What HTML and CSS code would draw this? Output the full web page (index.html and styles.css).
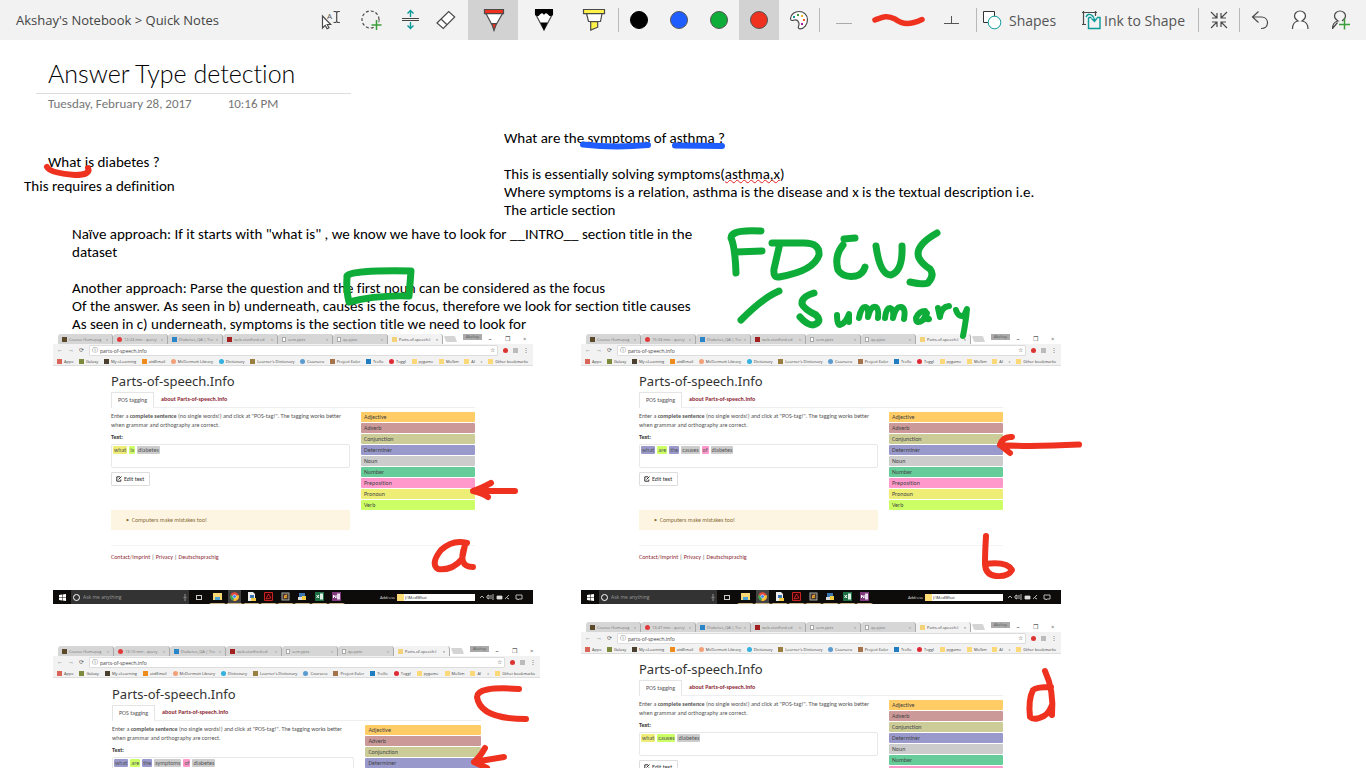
FILE: index.html
```html
<!DOCTYPE html>
<html lang="en">
<head>
<meta charset="utf-8">
<title>Answer Type detection</title>
<link rel="stylesheet" href="styles.css">
</head>
<body>
<header class="toolbar">
  <nav class="crumbs">Akshay's Notebook &gt; Quick Notes</nav>
  <div class="tools">
    <button class="tool" aria-label="Select"><svg viewBox="0 0 40 40"><path class="ln" fill="#fff" d="M14.5 16v12l2.7-2.6 1.9 3.4 1.9-1-1.8-3.3h3.5z"/><path class="ln" d="M25.5 11.5h2.2l1 1 1-1h2.2M28.7 12.5v9M25.5 22.5h2.2l1-1 1 1h2.2"/><text x="19" y="19" class="ico-a">A</text></svg></button>
    <button class="tool" aria-label="Lasso"><svg viewBox="0 0 40 40"><circle class="ln" cx="22.5" cy="19.5" r="8.5" stroke-dasharray="3 2"/><path d="M28.5 20v10M23.5 25h10" stroke="#f2f2f2" stroke-width="4"/><path d="M28.5 20v10M23.5 25h10" stroke="#3a9f3a" stroke-width="1.5"/></svg></button>
    <button class="tool" aria-label="Insert space"><svg viewBox="0 0 40 40"><path d="M14 18.5h17M14 20.5h17" stroke="#444"/><path class="teal" d="M22.5 17v-6.5M19.5 13.5l3-3 3 3M22.5 22v6.5M19.5 25.5l3 3 3-3"/></svg></button>
    <button class="tool" aria-label="Eraser"><svg viewBox="0 0 40 40"><path class="ln" fill="#fff" d="M9 23L20.7 11.5l6 5.5L15.3 28.5zM13 19l6 5.7"/></svg></button>
    <button class="tool pen selected" aria-label="Red pen"><svg viewBox="0 0 50 40"><path class="ln" fill="#fff" d="M18 13.5h16.5L28.5 24h-5z"/><path class="ln" fill="#ef3220" d="M16.5 9.5h19v4.2h-19zM23.7 23.7h4.8L26 30.5z"/></svg></button>
    <button class="tool pen" aria-label="Pencil"><svg viewBox="0 0 50 40"><path class="ln" fill="#fff" d="M17.5 14L26 30l8.5-16v-3h-17z"/><path d="M17 9h18v6q-3 2.500-5-.5-2.500-2.500-4 .5-1.500-3-4-.5-2 3-5 .5zM22.300 22.500h7.400L26 30.500z"/></svg></button>
    <button class="tool pen" aria-label="Highlighter"><svg viewBox="0 0 50 40"><path class="ln" fill="#fff" d="M18.500 13.500h15.500l-1.500 8h-12z"/><path class="ln" fill="#fff24a" d="M15.500 9.500h21v4.200h-21zM22.700 21.700h7v5.500l-7 2.800z"/></svg></button>
    <i class="sep"></i>
    <button class="tool" aria-label="Black"><i class="dot black"></i></button>
    <button class="tool" aria-label="Blue"><i class="dot blue"></i></button>
    <button class="tool" aria-label="Green"><i class="dot green"></i></button>
    <button class="tool selected" aria-label="Red"><i class="dot red"></i></button>
    <button class="tool" aria-label="More colors"><svg viewBox="0 0 40 40"><path class="ln" fill="#fff" d="M11.500 18.500C12 14 16 11.500 20 11.500c5 0 8.500 3.500 8.500 8 0 5-3.500 9.300-7.500 9.300-3.500 0-.5-3.200-1-5.500-.8-2.800-2.500-3.800-4.500-3.300-2 .6-4 1.200-4-1.500z"/><path fill="#0b9a9a" d="M14 16h2v2h-2z"/><path fill="#3a9f3a" d="M18 14h2v2h-2z"/><path fill="#f5b52a" d="M22 15h2v2h-2z"/><path fill="#ef5a20" d="M24 19h2v2h-2z"/><path fill="#b5179e" d="M22 23h2v2h-2z"/></svg></button>
    <i class="sep"></i>
    <button class="tool pen" aria-label="Thinner"><svg viewBox="0 0 50 40"><path d="M16 23.500h16" stroke="#aaa"/></svg></button>
    <button class="tool stroke" aria-label="Stroke preview"><svg viewBox="0 0 56 40"><path d="M5 20c8-3 12-5 20-1 8 6 15 6 27 0.500" fill="none" stroke="#ef3220" stroke-width="5.500" stroke-linecap="round"/></svg></button>
    <button class="tool pen" aria-label="Thicker"><svg viewBox="0 0 50 40"><path d="M18 23.500h15M25.500 16v7" stroke="#555"/></svg></button>
    <i class="sep"></i>
    <button class="tool shapes"><svg viewBox="0 0 32 40"><path d="M6.500 11.500h11v11h-11z" fill="#fff" stroke="#333"/><circle cx="17.500" cy="22.500" r="6.300" fill="#fff" stroke="#0b9a9a"/></svg>Shapes</button>
    <button class="tool inkshape"><svg viewBox="0 0 28 40"><path class="ln" d="M6 12.500h15M7.500 11v14M19.500 11v5M6 24.500h4"/><path class="teal" d="M12.500 17.500h3M21 17.500h3v11H12.500v-11"/><path class="teal" d="M10 17q2-4 5.500-2 2.500 1.500 3 6M15.500 18.500l3 3 2.500-3.500"/></svg>Ink to Shape</button>
    <i class="sep"></i>
    <button class="tool" aria-label="Collapse"><svg viewBox="0 0 40 40"><path class="ln" d="M12 12l6 6M13 18h5v-5M28 12l-6 6M22 13v5h5M12 28l6-6M13 22h5v5M28 28l-6-6M22 27v-5h5"/></svg></button>
    <i class="sep"></i>
    <button class="tool" aria-label="Undo"><svg viewBox="0 0 40 40"><path class="ln" d="M18.500 11.500l-6 5.500 6 5.500M12.500 17H22c8 1 7 12-1 11.500"/></svg></button>
    <button class="tool" aria-label="Account"><svg viewBox="0 0 40 40"><path class="ln" fill="#fafafa" d="M12.500 29q0-7 5.500-8-3.500-2-3.500-5a5.500 5 0 0 1 11 0q0 3-3.500 5 6 1 6 8"/></svg></button>
    <button class="tool" aria-label="Share"><svg viewBox="0 0 40 40"><path class="ln" d="M12.500 29q0-7 5.500-8-3.500-2-3.500-5a5.500 5 0 0 1 11 0q0 3-3.500 5M12.500 28.500l5-6"/><path d="M24.500 18.500v11M19 24.500h11" stroke="#3a9f3a" stroke-width="1.500"/></svg></button>
  </div>
</header>
<main class="canvas">
  <section class="page-title">
    <h1>Answer Type detection</h1>
    <p><span>Tuesday, February 28, 2017</span><span>10:16 PM</span></p>
  </section>
  <p class="note note-question">What is diabetes ?</p>
  <p class="note note-definition">This requires a definition</p>
  <div class="note note-approach">
    <p>Naïve approach: If it starts with "what is" , we know we have to look for __INTRO__ section title in the<br>dataset</p>
    <p>Another approach: Parse the question and the first noun can be considered as the focus<br>Of the answer. As seen in b) underneath, causes is the focus, therefore we look for section title causes<br>As seen in c) underneath, symptoms is the section title we need to look for</p>
  </div>
  <div class="note note-asthma">
    <p>What are the symptoms of asthma ?</p>
    <p>This is essentially solving symptoms(<span class="misspelt">asthma,x</span>)<br>Where symptoms is a relation, asthma is the disease and x is the textual description i.e.<br>The article section</p>
  </div>
  <article class="shot shot-a" data-time="12:24" data-words="what:pronoun is:verb diabetes:noun"></article>
  <article class="shot shot-b" data-time="15:34" data-words="what:determiner are:verb the:determiner causes:noun of:preposition diabetes:noun"></article>
  <article class="shot shot-c" data-time="13:10" data-words="what:determiner are:verb the:determiner symptoms:noun of:preposition diabetes:noun"></article>
  <article class="shot shot-d" data-time="13:47" data-words="what:pronoun causes:verb diabetes:noun"></article>
  <svg class="ink" width="1366" height="728" viewBox="0 40 1366 728" aria-hidden="true">
    <g class="ink-blue"><path d="M583 144.500Q614 148 648 145"/><path d="M675 145.500L722 146"/></g>
    <g class="ink-green">
      <path d="M761 231Q741 230 735 233 731 235 731 238 735 246 736 273M736 252L762 251"/>
      <path d="M772 243H804Q820 243 819 255 814 271 779 277 773 278 774 269L780 243"/>
      <path d="M844 239L855 238M843 245Q834 256 838 270 843 278 856 276 863 274 865 267"/>
      <path d="M876 246Q880 275 891 275 903 271 902 246"/>
      <path d="M937 233Q914 246 919 258 922 264 930 269 935 275 928 283 923 285 910 282"/>
      <path d="M779 291Q764 297 741 320"/>
      <path d="M814 293Q801 297 802 304 804 309 816 315 823 322 813 325 807 325 800 317"/>
      <path class="fine" d="M837 315Q837 325 840 325 846 323 849 314V322"/>
      <path class="fine" d="M859 318Q861 307 865 307 869 307 868 317 871 305 876 307 879 309 878 318"/>
      <path class="fine" d="M885 318Q886 308 890 308 894 309 893 318 896 306 901 307 906 308 904 319"/>
      <path class="fine" d="M925 311Q919 311 916 318 916 325 923 320L927 313Q925 320 929 319"/>
      <path class="fine" d="M938 308L940 317Q941 307 949 306"/>
      <path class="fine" d="M956 310Q958 317 964 316L967 309Q966 321 963 336"/>
      <path d="M347 276Q350 270 411 271L409 296Q375 295 349 302 346 290 347 277"/>
    </g>
    <g class="ink-red">
      <path d="M47 167Q50 173 75 175 91 175 88 168"/>
      <path d="M515 491H473M491 483Q480 489 473 491 482 493 488 497"/>
      <path d="M467 543Q453 539 441 550 430 564 438 569 452 571 462 559L465 545Q457 567 473 567"/>
      <path d="M1079 444.500Q1030 447 1000 445M1012 437Q1003 436 1000 445L1010 453"/>
      <path d="M986 536Q985 552 985 563 985 575 996 576 1008 577 1012 570 1007 561 985 564"/>
      <path d="M519 689Q477 686 477 697 480 719 526 719"/>
      <path d="M504 757L474 762M485 748Q480 757 474 762L487 768"/>
      <path d="M1045 671Q1054 690 1052 715M1051 687Q1036 687 1033 690 1028 700 1030 717 1034 721 1044 716 1049 713 1052 705"/>
    </g>
  </svg>
</main>
<script src="app.js"></script>
</body>
</html>
```
FILE: styles.css
```css
* { box-sizing: border-box; }
body { margin: 0; height: 100vh; display: flex; flex-direction: column; overflow: hidden; background: #fff; color: #000; font-family: Carlito, Lato, sans-serif; font-variant-ligatures: none; }
h1, h2, p, ul { margin: 0; padding: 0; font-weight: normal; }
ul { list-style: none; }
button { margin: 0; padding: 0; border: 0; background: none; font: inherit; color: inherit; }

.toolbar { flex: none; height: 40px; display: flex; align-items: center; justify-content: space-between; padding: 0 6px 0 16px; background: #f2f2f2; font-family: "Open Sans", sans-serif; color: #444; white-space: nowrap; }
.crumbs { font-size: 13px; }
.tools { display: flex; align-items: center; }
.tool { width: 40px; height: 40px; display: flex; align-items: center; justify-content: center; }
.tool svg { height: 40px; flex: none; }
.pen { width: 50px; }
.stroke { width: 56px; }
.shapes, .inkshape { justify-content: flex-start; font-size: 14px; color: #555; }
.shapes { width: 99px; }
.inkshape { width: 122px; }
.selected { background: #d2d2d2; }
.sep { width: 1px; height: 24px; background: #b8b8b8; }
.dot { width: 18px; height: 18px; border: 1px solid #555; border-radius: 50%; }
.black { background: #000; border-color: #000; }
.blue { background: #1f5dff; }
.green { background: #0eac38; }
.red { background: #ef3220; }
.ln { stroke: #4a4a4a; stroke-width: 1.2; }
.ln:not([fill]) { fill: none; }
.teal { stroke: #0b9a9a; stroke-width: 1.4; fill: none; }
.ico-a { font-size: 8px; fill: #555; }

.canvas { position: relative; flex: 1; overflow: hidden; }
.page-title { position: absolute; left: 36px; top: 18px; width: 315px; }
.page-title h1 { height: 36px; padding-left: 12px; border-bottom: 1px solid #ddd; font-family: Lato, sans-serif; font-size: 25px; line-height: 30px; font-weight: 300; white-space: nowrap; }
.page-title p { display: flex; gap: 36px; padding-left: 12px; font-size: 13px; line-height: 20px; color: #767676; white-space: nowrap; }
.note { position: absolute; font-size: 15px; line-height: 18px; white-space: nowrap; }
.note p + p { margin-top: 18px; }
.note-question { left: 48px; top: 113px; }
.note-definition { left: 24px; top: 137px; }
.note-approach { left: 72px; top: 185px; }
.note-asthma { left: 504px; top: 89px; }
.misspelt { text-decoration: underline wavy #e02020 1px; text-decoration-skip-ink: none; text-underline-offset: 0; }
.ink { position: absolute; left: 0; top: 0; fill: none; stroke-width: 6; stroke-linecap: round; stroke-linejoin: round; pointer-events: none; }
.ink-blue { stroke: #1f5dff; }
.ink-green { stroke: #0eac38; stroke-width: 7; }
.ink-green .fine { stroke-width: 6; }
.ink-red { stroke: #ef3220; }

.shot { position: absolute; width: 480px; background: #fff; font-size: 6px; line-height: 9px; color: #555; white-space: nowrap; }
.shot-a { left: 53px; top: 294px; }
.shot-b { left: 581px; top: 294px; }
.shot-c { left: 53px; top: 606px; width: 487px; }
.shot-d { left: 581px; top: 582px; }

.tabstrip { display: flex; height: 10px; padding-left: 5px; font-family: "Open Sans", sans-serif; font-size: 4px; }
.tab { flex: 1; height: 10px; display: flex; align-items: center; gap: 2px; padding: 0 4px; background: #d6d6d6; border-right: 1px solid #aaa; border-radius: 3px 3px 0 0; color: #777; }
.tab span { flex: 1; text-align: left; }
.tab.active { background: #f2f2f2; color: #444; }
.newtab { width: 11px; height: 6px; margin: 2px; background: #d4d4d4; border-radius: 1px; transform: skewX(20deg); }
.user { width: 19px; height: 6px; margin-left: 5px; background: #aaa; line-height: 6px; text-align: center; color: #555; }
.win { width: 51px; display: flex; justify-content: space-around; align-items: center; font-size: 6px; }
.fav { flex: none; width: 5px; height: 5px; background: var(--c, #ddd); }
.fav.round { border-radius: 50%; }
.fav.page { border: 1px solid #aaa; background: #fff; width: 4px; }
.address { display: flex; align-items: center; height: 13px; padding: 1px 4px; gap: 5px; background: #f2f2f2; font-family: "Open Sans", sans-serif; font-size: 6px; }
.url { flex: 1; height: 11px; display: flex; align-items: center; gap: 2px; padding: 0 2px; background: #fff; border: 1px solid #ddd; border-radius: 1px; font-size: 6px; }
.url input { flex: 1; min-width: 0; padding: 0; border: 0; background: none; font: 5px "Open Sans", sans-serif; color: #444; }
.bookmarks { display: flex; align-items: center; justify-content: space-between; height: 9px; padding: 0 5px 0 4px; background: #f2f2f2; border-bottom: 1px solid #ddd; font-family: "Open Sans", sans-serif; font-size: 4px; }
.bookmarks a { display: flex; align-items: center; gap: 2px; color: #444; text-decoration: none; }

.site { padding: 5px 58px 0; }
.shot-c .site { padding: 6px 59px 0; }
.site h2 { height: 21px; line-height: 20px; font-family: "Noto Sans", sans-serif; font-size: 13px; color: #333; }
.site-tabs { display: flex; height: 16px; border-bottom: 1px solid #eee; font-weight: bold; line-height: 15px; }
.site-tabs a { padding: 0 7px; color: #8d2a36; text-decoration: none; }
.site-tabs a.current { height: 16px; padding: 0 6px; background: #fff; border: 1px solid #e5e5e5; border-bottom: 0; border-radius: 1px; color: #555; font-weight: normal; }
.cols { display: grid; grid-template-columns: 239fr 114fr; column-gap: 11px; padding-top: 4px; }
.cols label { display: block; margin-top: 3px; font-weight: bold; color: #333; }
.words { height: 24px; display: flex; align-items: flex-start; gap: 2px; margin-top: 2px; padding: 1px; border: 1px solid #e8e8e8; border-radius: 2px; }
.words span { padding: 0 1px; line-height: 8px; border-radius: 1px; }
.edit { display: flex; align-items: center; gap: 2px; width: 39px; height: 14px; margin-top: 4px; padding: 0 4px; border: 1px solid #ddd; border-radius: 1px; color: #333; }
.edit svg { width: 6px; height: 6px; }
.alert { height: 20px; margin-top: 24px; padding-left: 15px; line-height: 20px; border-radius: 1px; background: #fdf5e1; color: #8a6d3b; }
.kinds li { height: 10px; margin-bottom: 1px; padding-left: 3px; line-height: 10px; border-radius: 1px; color: #444; }
.adjective { background: #fc6; }
.adverb { background: #c99; }
.conjunction { background: #cc9; }
.determiner { background: #99c; }
.noun { background: #ccc; }
.number { background: #6c9; }
.preposition { background: #f9c; }
.pronoun { background: #ee7; }
.verb { background: #cf6; }
.foot { margin-top: 15px; padding-top: 7px; height: 45px; border-top: 1px solid #f4f4f4; }
.foot a { color: #8d2a36; text-decoration: none; }

.taskbar { display: flex; align-items: center; height: 14px; background: #0d0c0b; color: #ddd; font-family: "Open Sans", sans-serif; font-size: 5px; }
.start { width: 18px; height: 14px; display: grid; place-items: center; }
.start svg { width: 7px; height: 7px; }
.search { width: 118px; height: 14px; display: flex; align-items: center; gap: 3px; padding: 0 2px; background: #333; color: #999; }
.search i { width: 7px; height: 7px; border: 1px solid #fff; border-radius: 50%; }
.search svg { width: 4px; height: 7px; margin-left: auto; }
.view { width: 6px; height: 5px; margin: 0 7px; border: 1px solid #ccc; }
.app { width: 17px; height: 14px; display: grid; place-items: center; border-bottom: 1px solid #c9b48c; border-left: 2px solid #0d0c0b; border-right: 2px solid #0d0c0b; }
.app.on { background: #444; }
.app svg { width: 9px; height: 9px; }
.addr { margin-left: auto; font-size: 4px; display: flex; align-items: center; gap: 2px; }
.addr input { width: 78px; height: 7px; padding: 0 8px; border: 0; background: linear-gradient(90deg, #fd7 7px, #fff 7px); font: 4px "Open Sans", sans-serif; color: #222; }
.tray { width: 58px; padding: 0 8px 0 4px; }
.tray svg { display: block; width: 46px; height: 8px; }
```
FILE: app.js
```js
const kinds = ["Adjective", "Adverb", "Conjunction", "Determiner", "Noun", "Number", "Preposition", "Pronoun", "Verb"];

const fav = (color, shape = "") => `<i class="fav ${shape}" style="--c:${color}"></i>`;

const tabs = time => [
  ["Course Homepag", fav("#5a4a2a")],
  [`${time} min - query`, fav("#e23b3b", "round")],
  ["Diabetes_QA | Tre", fav("#2a86c8")],
  ["web.stanford.ed", fav("#a32020")],
  ["sem.pptx", fav("", "page")],
  ["qa.pptx", fav("", "page")],
  ["Parts-of-speech.I", fav("#f3d27a")]
];

const bookmarks = [
  ["Apps", "#d9655a"], ["Galaxy", "#7d8a3c"], ["My eLearning", "#4a4030"], ["utdEmail", "#f08c1e"],
  ["McDermott Library", "#f2a07a", "round"], ["Dictionary", "#33b1e0", "round"], ["Learner's Dictionary", "#9a8040"],
  ["Coursera", "#5a9bd0", "round"], ["Project Euler", "#a5734a"], ["Trello", "#1f7ec2"], ["Toggl", "#e02a36", "round"],
  ["pygame", "#fbd978"], ["MoSim", "#fbd978"], ["AI", "#fbd978"]
];

const appIcons = [
  '<path fill="#f8d775" d="M0 1h9v7H0z"/><path fill="#4da3d8" d="M2 5h5v3H2z"/>',
  '<circle cx="4.500" cy="4.500" r="4.300" fill="#e3493b"/><path fill="#37a853" d="M4.500 4.500L.5 3a4.200 4.200 0 0 0 3 5.700z"/><path fill="#fbc02d" d="M4.500 4.500L3.500 8.700A4.200 4.200 0 0 0 8.600 3z"/><circle cx="4.500" cy="4.500" r="1.800" fill="#4285f4" stroke="#fff" stroke-width=".5"/>',
  '<path fill="#eee" d="M1 0h5l2 2v7H1z"/><path fill="#3b77b0" d="M3 3h4v3H3z"/><path fill="#f5cd45" d="M4 6h5v3H4z"/>',
  '<path fill="#300" stroke="#c22" d="M.5.5h8v8h-8z"/><path d="M2 7l2.500-5 2.500 4-5 1" fill="none" stroke="#e33" stroke-width=".7"/>',
  '<path fill="#aaa" d="M.5.5h8v8h-8z"/><path fill="#43372c" d="M1.500 1.500h6v6h-6z"/><path d="M3 4l3-1-3 2 3 0-3 1" stroke="#f0a030" fill="none"/>',
  '<path fill="#3b77b0" d="M1 1h6v4H1z"/><path fill="#ddd" d="M0 5h4v3H0z"/><path fill="#f5cd45" d="M4 4h4v4H4z"/>',
  '<path fill="#1d7044" d="M0 0h9v9H0z"/><path fill="#dff0e5" d="M5 1.500h3v6H5z"/><path d="M1.500 3l2.500 3M4 3L1.500 6" stroke="#fff"/>',
  '<path fill="#80397b" d="M0 0h9v9H0z"/><path fill="#eadcf0" d="M5 1.500h3v6H5z"/><path d="M1.500 6V3l2.500 3V3" fill="none" stroke="#fff"/>'
];

function render(shot, index) {
  const words = shot.dataset.words.split(" ").map(pair => pair.split(":"));
  shot.innerHTML = `
    <div class="tabstrip">
      ${tabs(shot.dataset.time).map(([name, icon], i) => `<button class="tab${i === 6 ? " active" : ""}">${icon}<span>${name}</span>×</button>`).join("")}
      <i class="newtab"></i><div class="user">Akshay</div><div class="win"><b>–</b><span>❐</span><span>×</span></div>
    </div>
    <div class="address"><span>←</span><span>→</span><span>⟳</span>
      <div class="url"><span>ⓘ</span><input aria-label="Address" value="parts-of-speech.info"><span>☆</span></div>
      ${fav("#d33", "round")}${fav("#bbb")}<span>⋮</span>
    </div>
    <nav class="bookmarks">
      ${bookmarks.map(([name, color, shape]) => `<a href="#">${fav(color, shape)}${name}</a>`).join("")}
      <span>»</span><a href="#">${fav("#fbd978")}Other bookmarks</a>
    </nav>
    <div class="site">
      <h2>Parts-of-speech.Info</h2>
      <nav class="site-tabs"><a class="current" href="#">POS tagging</a><a href="#">about Parts-of-speech.Info</a></nav>
      <div class="cols">
        <div>
          <p>Enter a <b>complete sentence</b> (no single words!) and click at "POS-tag!". The tagging works better<br>when grammar and orthography are correct.</p>
          <label id="text-${index}">Text:</label>
          <div class="words" aria-labelledby="text-${index}">${words.map(([word, kind]) => `<span class="${kind}">${word}</span>`).join("")}</div>
          <button class="edit"><svg viewBox="0 0 6 6"><path d="M4 .8H.8v4.400h4V3.500M2.500 3.500L5.500.5" fill="none" stroke="#333"/></svg>Edit text</button>
          <p class="alert">•&nbsp; Computers make mistakes too!</p>
        </div>
        <ul class="kinds">${kinds.map(kind => `<li class="${kind.toLowerCase()}">${kind}</li>`).join("")}</ul>
      </div>
      <p class="foot"><a href="#">Contact/Imprint</a> | <a href="#">Privacy</a> | <a href="#">Deutschsprachig</a></p>
    </div>
    <div class="taskbar">
      <div class="start"><svg viewBox="0 0 7 7"><path fill="#fff" d="M0 1l3-.5v2.800H0zM3.500.4L7 0v3.300H3.500zM0 3.800h3v2.700L0 6zM3.500 3.800H7V7l-3.500-.5z"/></svg></div>
      <div class="search"><i></i>Ask me anything<svg viewBox="0 0 4 7"><path d="M2 0v4M.5 3q1.500 3 3 0M2 5v2" fill="none" stroke="#aaa" stroke-width=".8"/></svg></div>
      <i class="view"></i>
      ${appIcons.map((icon, i) => `<div class="app${i === 1 ? " on" : ""}"><svg viewBox="0 0 9 9">${icon}</svg></div>`).join("")}
      <label class="addr">Address <input value="J:\\MedWhat"></label>
      <div class="tray"><svg viewBox="0 0 46 8" fill="none" stroke="#ddd" stroke-width=".8"><path d="M1 5l2-2 2 2M8 3v2l2 1V2zM12 2v4M14 1v6M26 6l4-4M28 5l2 1"/><path fill="#ddd" d="M18 3h5v3h-5z"/><path d="M37 2h6v4h-3l-1 1V6h-2z"/></svg></div>
    </div>`;
}

document.querySelectorAll(".shot").forEach(render);
```
